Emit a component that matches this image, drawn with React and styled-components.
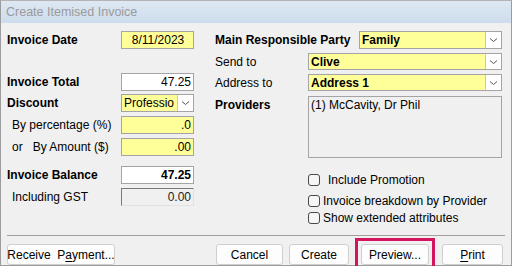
import styled, { createGlobalStyle } from "styled-components";

const Global = createGlobalStyle`
  html, body {
    margin: 0;
    padding: 0;
    background: #ffffff;
  }
  body {
    font-family: "Liberation Sans", Arial, sans-serif;
    font-size: 12px;
    color: #000;
  }
`;

const Window = styled.div`
  width: 512px;
  height: 266px;
  box-sizing: border-box;
  border: 1px solid #9c9c9c;
  border-top-color: #b4b4b4;
  background: #f0f0f0;
  display: flex;
  flex-direction: column;
`;

const TitleBar = styled.div`
  height: 22px;
  display: flex;
  align-items: center;
  padding-left: 5px;
  background: linear-gradient(#dde8f3, #cddced);
  color: #9a9a9a;
  font-size: 12.5px;
`;

const Body = styled.div`
  display: grid;
  grid-template-columns: 187px 287px;
  column-gap: 21px;
  padding: 8px 0 0 6px;
`;

const Column = styled.div`
  display: flex;
  flex-direction: column;
`;

const Row = styled.div`
  display: flex;
  align-items: center;
  height: ${(p) => p.$h || 18}px;
  margin-top: ${(p) => p.$mt || 0}px;
`;

const Label = styled.div`
  width: ${(p) => p.$w}px;
  flex: none;
  font-weight: ${(p) => (p.$bold ? 700 : 400)};
  padding-left: ${(p) => p.$indent || 0}px;
  box-sizing: border-box;
  white-space: pre;
  align-self: ${(p) => (p.$top ? "flex-start" : "center")};
  margin-top: ${(p) => (p.$top ? 2 : 0)}px;
`;

const Field = styled.div`
  width: ${(p) => p.$w}px;
  height: 100%;
  box-sizing: border-box;
  border: 1px solid #a4a4a4;
  background: ${(p) => (p.$yellow ? "#ffff99" : "#ffffff")};
  display: flex;
  align-items: center;
  justify-content: ${(p) => p.$align || "flex-end"};
  padding: 0 2px 0 3px;
  font-weight: ${(p) => (p.$bold ? 700 : 400)};
  overflow: hidden;
  white-space: nowrap;
`;

const Sunken = styled(Field)`
  background: #f0f0f0;
  border-color: #7a7a7a #e2e2e2 #e2e2e2 #7a7a7a;
  color: #222;
`;

const Select = styled.div`
  width: ${(p) => p.$w}px;
  height: 100%;
  box-sizing: border-box;
  border: 1px solid #a4a4a4;
  background: #ffff99;
  display: flex;
  align-items: stretch;
  font-weight: ${(p) => (p.$bold ? 700 : 400)};
`;

const SelectText = styled.div`
  flex: 1;
  display: flex;
  align-items: center;
  padding-left: 2px;
  overflow: hidden;
  white-space: nowrap;
`;

const DropButton = styled.div`
  width: 15px;
  flex: none;
  background: #ffffff;
  border-left: 1px solid #c8c8c8;
  display: flex;
  align-items: center;
  justify-content: center;
`;

const ListBox = styled.div`
  width: 194px;
  height: 62px;
  box-sizing: border-box;
  border: 1px solid #a4a4a4;
  padding: 1px 2px;
  background: #f0f0f0;
`;

const CheckRow = styled.label`
  display: flex;
  align-items: center;
  gap: ${(p) => p.$gap}px;
  margin-left: 93px;
  margin-top: ${(p) => p.$mt}px;
  height: 16px;
`;

const Box = styled.span`
  width: 12px;
  height: 12px;
  box-sizing: border-box;
  border: 1px solid #4a4a4a;
  border-radius: 3px;
  background: #f6f6f6;
`;

const Separator = styled.div`
  margin: 9px 6px 0 6px;
  border-top: 1px solid #a0a0a0;
`;

const Footer = styled.div`
  display: flex;
  align-items: center;
  padding: 8px 0 0 6px;
`;

const Button = styled.div`
  width: ${(p) => p.$w}px;
  height: 21px;
  margin-left: ${(p) => p.$ml || 0}px;
  box-sizing: border-box;
  border: 1px solid #cfcfcf;
  border-radius: 3px;
  background: #fdfdfd;
  display: flex;
  align-items: center;
  justify-content: center;
  white-space: pre;
  position: relative;
`;

const Highlight = styled.div`
  position: absolute;
  left: -7px;
  right: -7px;
  top: -7px;
  bottom: -8px;
  border: 3px solid #d2155e;
  pointer-events: none;
`;

const U = styled.span`
  text-decoration: underline;
  text-underline-offset: 2px;
`;

const Chevron = () => (
  <svg width="9" height="6" viewBox="0 0 9 6">
    <path d="M1 1.5 L4.5 4.5 L8 1.5" fill="none" stroke="#555" strokeWidth="1" />
  </svg>
);

const Dropdown = ({ w, bold, children }) => (
  <Select $w={w} $bold={bold}>
    <SelectText>{children}</SelectText>
    <DropButton>
      <Chevron />
    </DropButton>
  </Select>
);

export default function App() {
  return (
    <>
      <Global />
      <Window>
        <TitleBar>Create Itemised Invoice</TitleBar>
        <Body>
          <Column>
            <Row>
              <Label $w={114} $bold>Invoice Date</Label>
              <Field $w={73} $yellow $align="center">8/11/2023</Field>
            </Row>
            <Row $mt={24}>
              <Label $w={114} $bold>Invoice Total</Label>
              <Field $w={73}>47.25</Field>
            </Row>
            <Row $mt={3}>
              <Label $w={114} $bold>Discount</Label>
              <Dropdown w={73}>Professio</Dropdown>
            </Row>
            <Row $mt={4}>
              <Label $w={114} $indent={5}>By percentage (%)</Label>
              <Field $w={73} $yellow>.0</Field>
            </Row>
            <Row $mt={4}>
              <Label $w={114} $indent={5}>{"or   By Amount ($)"}</Label>
              <Field $w={73} $yellow>.00</Field>
            </Row>
            <Row $mt={10}>
              <Label $w={114} $bold>Invoice Balance</Label>
              <Field $w={73} $bold>47.25</Field>
            </Row>
            <Row $mt={4}>
              <Label $w={114} $indent={5}>Including GST</Label>
              <Sunken $w={73}>0.00</Sunken>
            </Row>
          </Column>
          <Column>
            <Row>
              <Label $w={144} $bold>Main Responsible Party</Label>
              <Dropdown w={143} bold>Family</Dropdown>
            </Row>
            <Row $mt={4} $h={17}>
              <Label $w={93}>Send to</Label>
              <Dropdown w={194} bold>Clive</Dropdown>
            </Row>
            <Row $mt={4} $h={17}>
              <Label $w={93}>Address to</Label>
              <Dropdown w={194} bold>Address 1</Dropdown>
            </Row>
            <Row $mt={5} $h={62}>
              <Label $w={93} $bold $top>Providers</Label>
              <ListBox>(1) McCavity, Dr Phil</ListBox>
            </Row>
            <CheckRow $mt={14} $gap={8}>
              <Box />
              Include Promotion
            </CheckRow>
            <CheckRow $mt={5} $gap={3}>
              <Box />
              Invoice breakdown by Provider
            </CheckRow>
            <CheckRow $mt={1} $gap={3}>
              <Box />
              Show extended attributes
            </CheckRow>
          </Column>
        </Body>
        <Separator />
        <Footer>
          <Button $w={108}>
            <span>
              Receive  P<U>a</U>yment...
            </span>
          </Button>
          <Button $w={67} $ml={101}>Cancel</Button>
          <Button $w={60} $ml={6}>Create</Button>
          <Button $w={68} $ml={12}>
            Preview...
            <Highlight />
          </Button>
          <Button $w={61} $ml={13}>
            <span>
              <U>P</U>rint
            </span>
          </Button>
        </Footer>
      </Window>
    </>
  );
}
